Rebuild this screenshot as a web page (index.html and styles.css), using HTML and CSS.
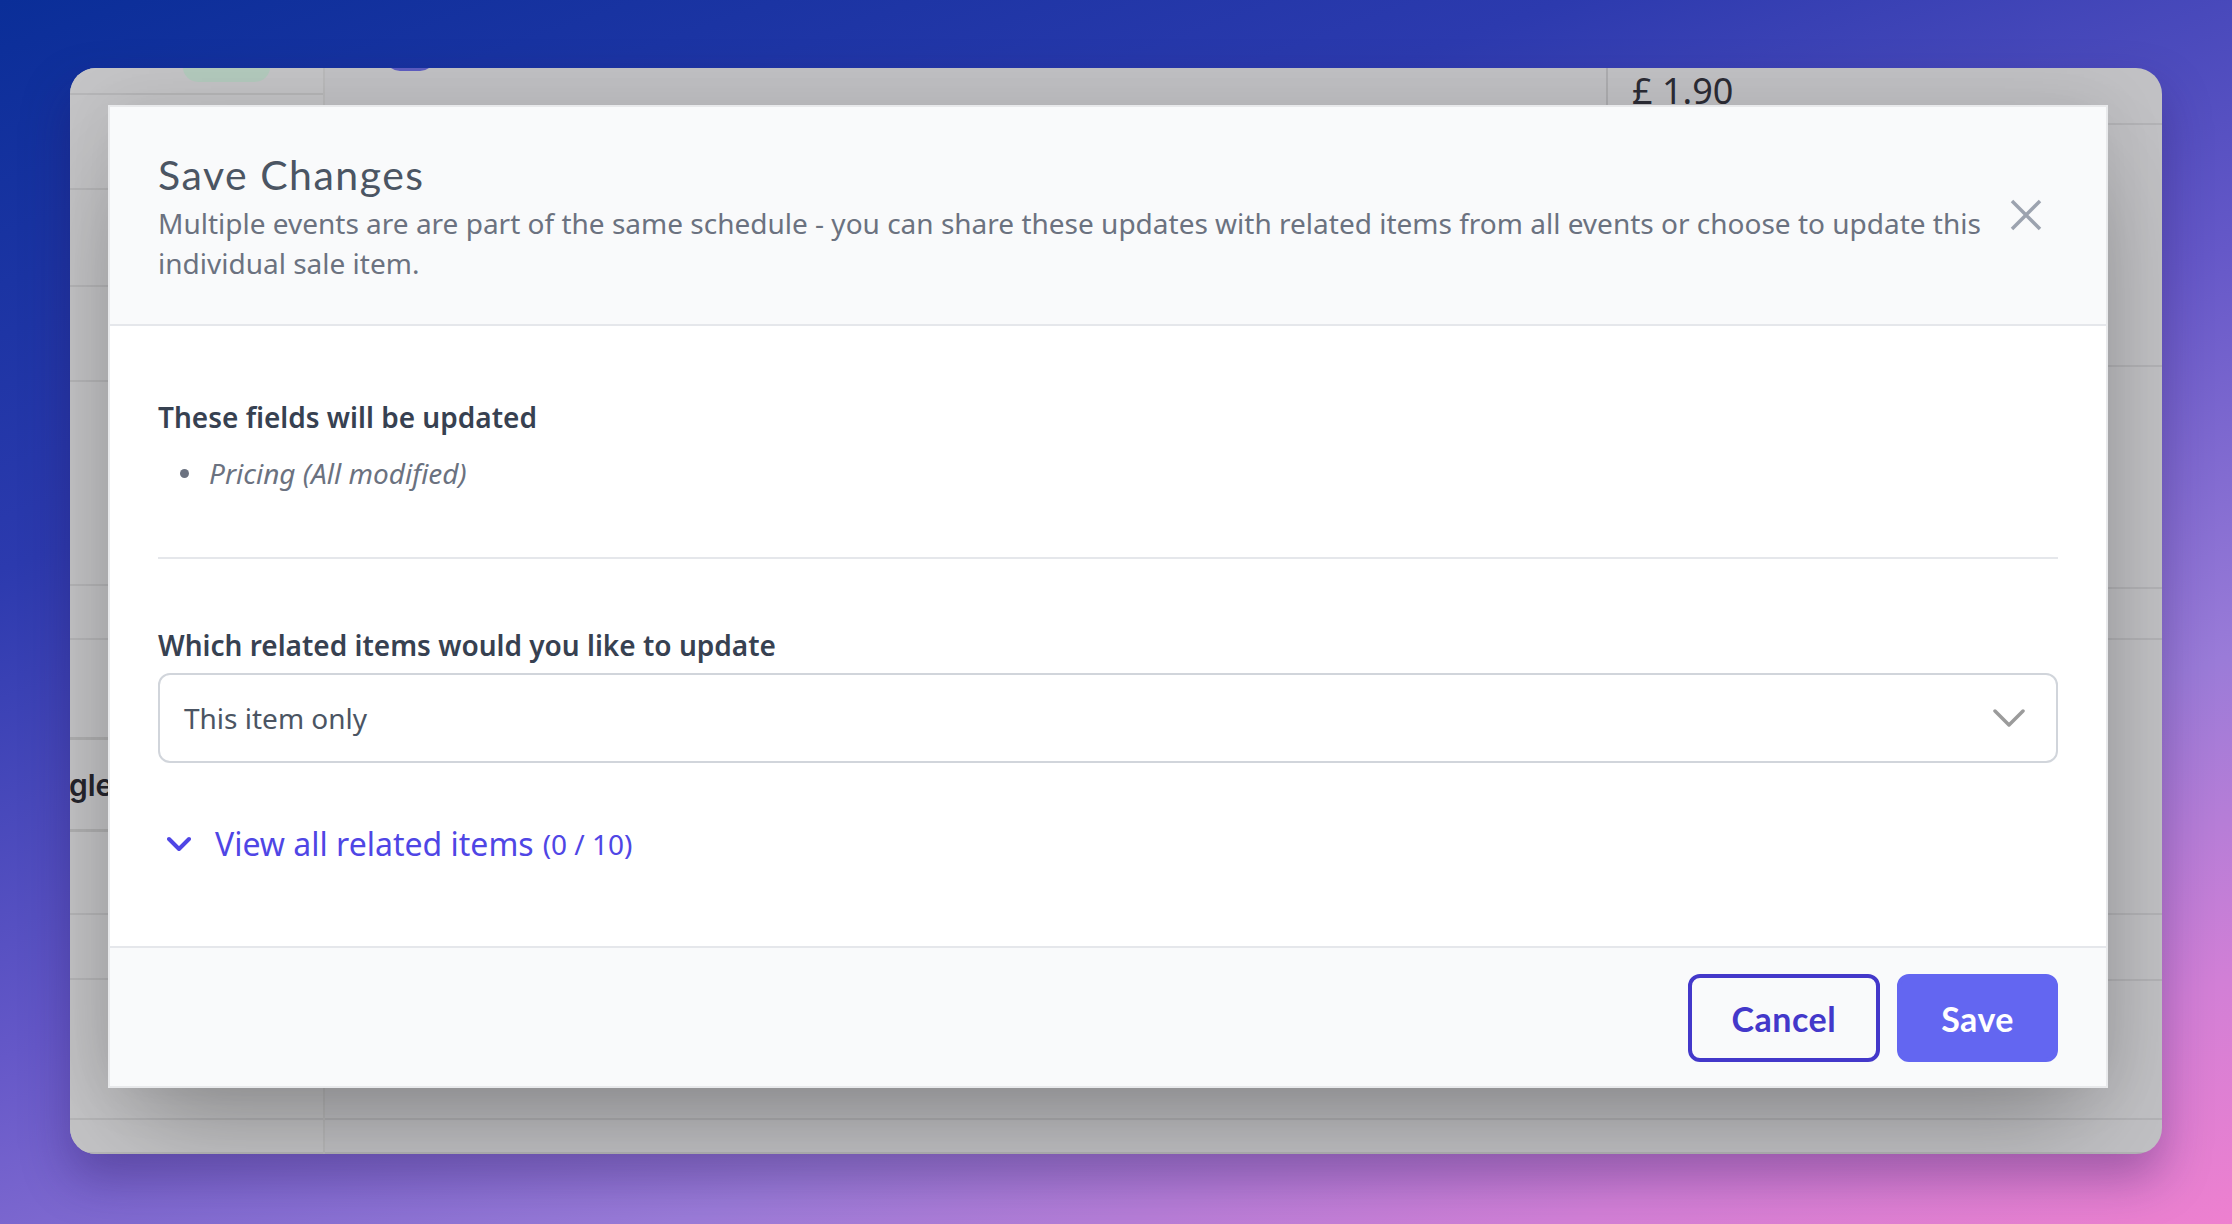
FILE: index.html
```html
<!DOCTYPE html>
<html lang="en">
<head>
    <meta charset="UTF-8">
    <title>Save Changes</title>
    <link rel="stylesheet" href="styles.css">
</head>
<body>
    <div class="window">
        <div class="app">
            <aside class="sidebar">
                <div class="side-row"><span class="pill"></span></div>
                <div class="side-row"></div>
                <div class="side-row"></div>
                <div class="side-row"></div>
                <div class="side-row"></div>
                <div class="side-row"></div>
                <div class="side-row"></div>
                <div class="side-row"><span class="side-label">gle</span></div>
                <div class="side-row"></div>
                <div class="side-row"></div>
                <div class="side-row"></div>
                <div class="side-row"></div>
            </aside>
            <main class="content">
                <div class="content-row top-row">
                    <div class="top-cell"><span class="switch"></span></div>
                    <div class="price">£ 1.90</div>
                </div>
                <div class="content-row"></div>
                <div class="content-row"></div>
                <div class="content-row"></div>
                <div class="content-row"></div>
                <div class="content-row"></div>
                <div class="content-row"></div>
                <div class="content-row"></div>
            </main>
        </div>

        <div class="modal">
            <div class="modal-header">
                <div class="modal-heading">
                    <h2 class="modal-title">Save Changes</h2>
                    <p class="modal-desc">Multiple events are are part of the same schedule - you can share these updates with related items from all events or choose to update this individual sale item.</p>
                </div>
                <button class="close-btn" aria-label="Close">
                    <svg width="32" height="32" viewBox="0 0 32 32" fill="none" stroke="#9ca3af" stroke-width="3.5">
                        <path d="M2 2 L30 30 M30 2 L2 30"/>
                    </svg>
                </button>
            </div>

            <div class="modal-body">
                <h3 class="section-title">These fields will be updated</h3>
                <ul class="changes">
                    <li>Pricing (All modified)</li>
                </ul>

                <hr class="divider">

                <label class="section-title field-label">Which related items would you like to update</label>
                <div class="select">
                    <span>This item only</span>
                    <svg width="32" height="18" viewBox="0 0 32 18" fill="none" stroke="#9b9b9b" stroke-width="3.5" stroke-linecap="round" stroke-linejoin="round">
                        <path d="M2 2 L16 16 L30 2"/>
                    </svg>
                </div>

                <a class="related-link">
                    <svg class="link-chevron" width="24" height="16" viewBox="0 0 24 16" fill="none" stroke="#4f46e5" stroke-width="4" stroke-linecap="round" stroke-linejoin="round">
                        <path d="M2 3 L12 13 L22 3"/>
                    </svg>
                    View all related items <span class="count">(0 / 10)</span>
                </a>
            </div>

            <div class="modal-footer">
                <button class="btn btn-outline">Cancel</button>
                <button class="btn btn-primary">Save</button>
            </div>
        </div>
    </div>
</body>
</html>
```

FILE: styles.css
```css
html, body {
    margin: 0;
}

body {
    width: 2232px;
    height: 1224px;
    padding: 68px 70px 0;
    box-sizing: border-box;
    overflow: hidden;
    background: linear-gradient(160deg, #0a2e98 0%, #2c3aae 28%, #6558c8 52%, #9a7bd8 72%, #d27fd6 88%, #ee80cf 100%);
    font-family: "Noto Sans", "Open Sans", sans-serif;
}

/* dimmed app window behind the dialog */
.window {
    position: relative;
    width: 2092px;
    height: 1086px;
    border-radius: 26px;
    overflow: hidden;
    background: #c1c1c4;
    box-shadow: 0 24px 48px rgba(40, 20, 90, 0.35);
}

.app {
    display: flex;
    height: 100%;
}

.sidebar {
    width: 253px;
    display: grid;
    grid-template-rows: 27px 95px 97px 95px 204px 54px 100px 92px 83px 65px 140px 1fr;
    border-right: 2px solid rgba(0, 0, 0, 0.05);
    background: #c4c4c6;
}

.side-row {
    border-bottom: 2px solid rgba(0, 0, 0, 0.07);
    display: flex;
    align-items: center;
    overflow: hidden;
}

.side-row:nth-child(7),
.side-row:nth-child(8) {
    border-bottom: 3px solid rgba(0, 0, 0, 0.1);
}

.pill {
    display: block;
    width: 87px;
    height: 30px;
    margin: -28px 0 0 113px;
    border-radius: 15px;
    background: #b3cabd;
}

.side-label {
    margin-left: -1px;
    font-family: Inter, sans-serif;
    font-weight: 600;
    font-size: 30px;
    color: #25252d;
}

.content {
    flex: 1;
    display: grid;
    grid-template-rows: 57px 242px 222px 51px 275px 66px 139px 1fr;
}

.content-row {
    border-bottom: 2px solid rgba(0, 0, 0, 0.07);
}

.top-row {
    display: flex;
}

.top-cell {
    width: 1281px;
    border-right: 2px solid rgba(0, 0, 0, 0.1);
}

.switch {
    display: block;
    width: 50px;
    height: 30px;
    margin: -27px 0 0 60px;
    border-radius: 15px;
    background: #5d5cc0;
}

.price {
    margin-top: 5px;
    padding-left: 24px;
    font-size: 36px;
    line-height: 1;
    color: #2c2c35;
}

/* dialog */
.modal {
    position: absolute;
    left: 38px;
    top: 37px;
    width: 2000px;
    box-sizing: border-box;
    border: 2px solid #e8e9eb;
    background: #fff;
    box-shadow: 0 50px 100px -24px rgba(0, 0, 0, 0.3), 0 0 60px rgba(0, 0, 0, 0.08);
}

.modal-header {
    display: flex;
    align-items: center;
    padding: 40px 48px 41px;
    background: #f9fafb;
    border-bottom: 2px solid #e5e7eb;
}

.modal-heading {
    flex: 1;
}

.modal-title {
    margin: 0;
    font-family: Lato, "Noto Sans", sans-serif;
    font-weight: 400;
    font-size: 41px;
    letter-spacing: 1.5px;
    line-height: 56px;
    color: #4b5563;
}

.modal-desc {
    margin: 0;
    font-size: 28px;
    line-height: 40px;
    color: #6b7280;
}

.close-btn {
    display: flex;
    margin: 0 16px 0 20px;
    padding: 0;
    border: none;
    background: none;
    cursor: pointer;
}

.modal-body {
    padding: 71px 48px 78px;
}

.section-title {
    display: block;
    margin: 0;
    font-weight: 600;
    font-size: 28px;
    line-height: 40px;
    color: #374151;
}

.changes {
    margin: 16px 0 0;
    padding: 0;
    list-style: none;
}

.changes li {
    display: flex;
    align-items: center;
    font-style: italic;
    font-size: 28px;
    line-height: 40px;
    color: #6b7280;
}

.changes li::before {
    content: "";
    width: 9px;
    height: 9px;
    margin: 0 20px 0 22px;
    border-radius: 50%;
    background: #6b7280;
}

.divider {
    height: 2px;
    margin: 64px 0 66px;
    border: 0;
    background: #e5e7eb;
}

.field-label {
    margin-bottom: 8px;
}

.select {
    display: flex;
    align-items: center;
    justify-content: space-between;
    height: 90px;
    box-sizing: border-box;
    padding: 0 31px 0 24px;
    border: 2px solid #d1d5db;
    border-radius: 12px;
    font-size: 28px;
    color: #4b5563;
}

.related-link {
    display: flex;
    align-items: center;
    margin-top: 57px;
    font-size: 32px;
    line-height: 48px;
    color: #4f46e5;
    cursor: pointer;
}

.link-chevron {
    margin: 0 24px 0 9px;
}

.count {
    margin-left: 9px;
    font-size: 28px;
}

.modal-footer {
    display: flex;
    justify-content: flex-end;
    gap: 17px;
    padding: 26px 48px 24px;
    background: #f9fafb;
    border-top: 2px solid #e5e7eb;
}

.btn {
    height: 88px;
    padding: 0 40px;
    box-sizing: border-box;
    border: 4px solid #4338ca;
    border-radius: 12px;
    font-family: Lato, "Noto Sans", sans-serif;
    font-weight: 700;
    font-size: 34px;
    letter-spacing: 0.5px;
    cursor: pointer;
}

.btn-outline {
    background: transparent;
    color: #4338ca;
}

.btn-primary {
    background: #6366f1;
    border-color: #6366f1;
    color: #fff;
}
```
